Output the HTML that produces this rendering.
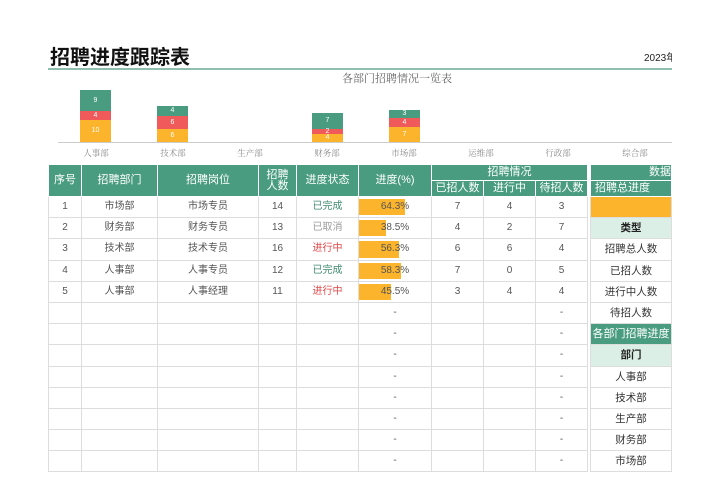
<!DOCTYPE html>
<html><head><meta charset="utf-8"><style>
*{margin:0;padding:0;box-sizing:border-box}
body{width:707px;height:500px;background:#fff;position:relative;overflow:hidden;font-family:"Liberation Sans","Noto Sans CJK SC",sans-serif;color:#555}
.a{position:absolute}
table{border-collapse:collapse;table-layout:fixed;position:absolute}
td{border:1px solid #ddd;text-align:center;font-size:10px;height:21.2px;line-height:12px;padding:0;vertical-align:middle;white-space:nowrap;overflow:hidden}
th{background:#4a9c80;color:#fff;font-weight:normal;font-size:11px;border:1px solid #fff;padding:0;line-height:11px}
.g{color:#3f8a6e}.r{color:#e34848}.x{color:#999}
.bar{position:relative}
.bar i{position:absolute;left:0;top:2px;bottom:2px;background:#fbb42c}
.bar span{position:relative}
.lab{font-size:8.5px;color:#888;width:60px;text-align:center;top:147px;font-family:"Liberation Serif","Noto Serif CJK SC",serif}
.b{position:absolute;color:#fff;font-size:7px;text-align:center;width:31px}
.rt td{font-size:10.5px;color:#333}
</style></head><body>
<div class="a" style="left:50px;top:41px;font-size:20px;font-weight:bold;color:#111">招聘进度跟踪表</div>
<div class="a" style="left:644px;top:49px;font-size:10px;color:#222;width:28px;overflow:hidden;white-space:nowrap">2023年</div>
<div class="a" style="left:48px;top:68px;width:624px;height:2px;background:#8fbfb0"></div>
<div class="a" style="left:300px;top:70px;width:194px;text-align:center;font-size:11px;color:#666;font-family:'Liberation Serif','Noto Serif CJK SC',serif">各部门招聘情况一览表</div>
<div class="a" style="left:58px;top:142px;width:614px;height:1px;background:#ccc"></div>
<div class="b" style="left:80px;top:90px;height:21px;background:#4a9c80;line-height:21px">9</div>
<div class="b" style="left:80px;top:111px;height:9px;background:#f05a5a;line-height:9px">4</div>
<div class="b" style="left:80px;top:120px;height:22px;background:#fbb42c;line-height:22px">10</div>
<div class="b" style="left:157px;top:106px;height:10px;background:#4a9c80;line-height:10px">4</div>
<div class="b" style="left:157px;top:116px;height:13px;background:#f05a5a;line-height:13px">6</div>
<div class="b" style="left:157px;top:129px;height:13px;background:#fbb42c;line-height:13px">6</div>
<div class="b" style="left:312px;top:113px;height:16px;background:#4a9c80;line-height:16px">7</div>
<div class="b" style="left:312px;top:129px;height:5px;background:#f05a5a;line-height:5px">2</div>
<div class="b" style="left:312px;top:134px;height:8px;background:#fbb42c;line-height:8px">4</div>
<div class="b" style="left:389px;top:110px;height:8px;background:#4a9c80;line-height:8px">3</div>
<div class="b" style="left:389px;top:118px;height:9px;background:#f05a5a;line-height:9px">4</div>
<div class="b" style="left:389px;top:127px;height:15px;background:#fbb42c;line-height:15px">7</div>
<div class="a lab" style="left:66px">人事部</div>
<div class="a lab" style="left:143px">技术部</div>
<div class="a lab" style="left:220px">生产部</div>
<div class="a lab" style="left:297px">财务部</div>
<div class="a lab" style="left:374px">市场部</div>
<div class="a lab" style="left:451px">运维部</div>
<div class="a lab" style="left:528px">行政部</div>
<div class="a lab" style="left:605px">综合部</div>

<table style="left:48px;top:164px;width:539px">
<colgroup><col style="width:33px"><col style="width:76px"><col style="width:101px"><col style="width:38px"><col style="width:62px"><col style="width:73px"><col style="width:52px"><col style="width:52px"><col style="width:52px"></colgroup>
<tr style="height:16px"><th rowspan="2">序号</th><th rowspan="2">招聘部门</th><th rowspan="2">招聘岗位</th><th rowspan="2">招聘<br>人数</th><th rowspan="2">进度状态</th><th rowspan="2">进度(%)</th><th colspan="3">招聘情况</th></tr>
<tr style="height:16px"><th>已招人数</th><th>进行中</th><th>待招人数</th></tr>
<tr><td>1</td><td>市场部</td><td>市场专员</td><td>14</td><td class="g">已完成</td><td class="bar"><i style="width:64%"></i><span>64.3%</span></td><td>7</td><td>4</td><td>3</td></tr>
<tr><td>2</td><td>财务部</td><td>财务专员</td><td>13</td><td class="x">已取消</td><td class="bar"><i style="width:38%"></i><span>38.5%</span></td><td>4</td><td>2</td><td>7</td></tr>
<tr><td>3</td><td>技术部</td><td>技术专员</td><td>16</td><td class="r">进行中</td><td class="bar"><i style="width:56%"></i><span>56.3%</span></td><td>6</td><td>6</td><td>4</td></tr>
<tr><td>4</td><td>人事部</td><td>人事专员</td><td>12</td><td class="g">已完成</td><td class="bar"><i style="width:58%"></i><span>58.3%</span></td><td>7</td><td>0</td><td>5</td></tr>
<tr><td>5</td><td>人事部</td><td>人事经理</td><td>11</td><td class="r">进行中</td><td class="bar"><i style="width:45%"></i><span>45.5%</span></td><td>3</td><td>4</td><td>4</td></tr>
<tr><td></td><td></td><td></td><td></td><td></td><td>-</td><td></td><td></td><td>-</td></tr>
<tr><td></td><td></td><td></td><td></td><td></td><td>-</td><td></td><td></td><td>-</td></tr>
<tr><td></td><td></td><td></td><td></td><td></td><td>-</td><td></td><td></td><td>-</td></tr>
<tr><td></td><td></td><td></td><td></td><td></td><td>-</td><td></td><td></td><td>-</td></tr>
<tr><td></td><td></td><td></td><td></td><td></td><td>-</td><td></td><td></td><td>-</td></tr>
<tr><td></td><td></td><td></td><td></td><td></td><td>-</td><td></td><td></td><td>-</td></tr>
<tr><td></td><td></td><td></td><td></td><td></td><td>-</td><td></td><td></td><td>-</td></tr>
<tr><td></td><td></td><td></td><td></td><td></td><td>-</td><td></td><td></td><td>-</td></tr>
</table>

<div class="a" style="left:590px;top:164px;width:82px;height:320px;overflow:hidden">
<table class="rt" style="left:0;top:0;width:82px">
<tr style="height:16px"><th style="text-align:right;padding-right:0">数据</th></tr>
<tr style="height:16px"><th style="text-align:left;padding-left:4px">招聘总进度</th></tr>
<tr><td style="background:#fbb42c"></td></tr>
<tr><td style="background:#dcefe7;color:#222;font-weight:bold">类型</td></tr>
<tr><td>招聘总人数</td></tr>
<tr><td>已招人数</td></tr>
<tr><td>进行中人数</td></tr>
<tr><td>待招人数</td></tr>
<tr><td style="background:#4a9c80;color:#fff;font-size:11px">各部门招聘进度</td></tr>
<tr><td style="background:#dcefe7;color:#222;font-weight:bold">部门</td></tr>
<tr><td>人事部</td></tr>
<tr><td>技术部</td></tr>
<tr><td>生产部</td></tr>
<tr><td>财务部</td></tr>
<tr><td>市场部</td></tr>
</table></div>
</body></html>
